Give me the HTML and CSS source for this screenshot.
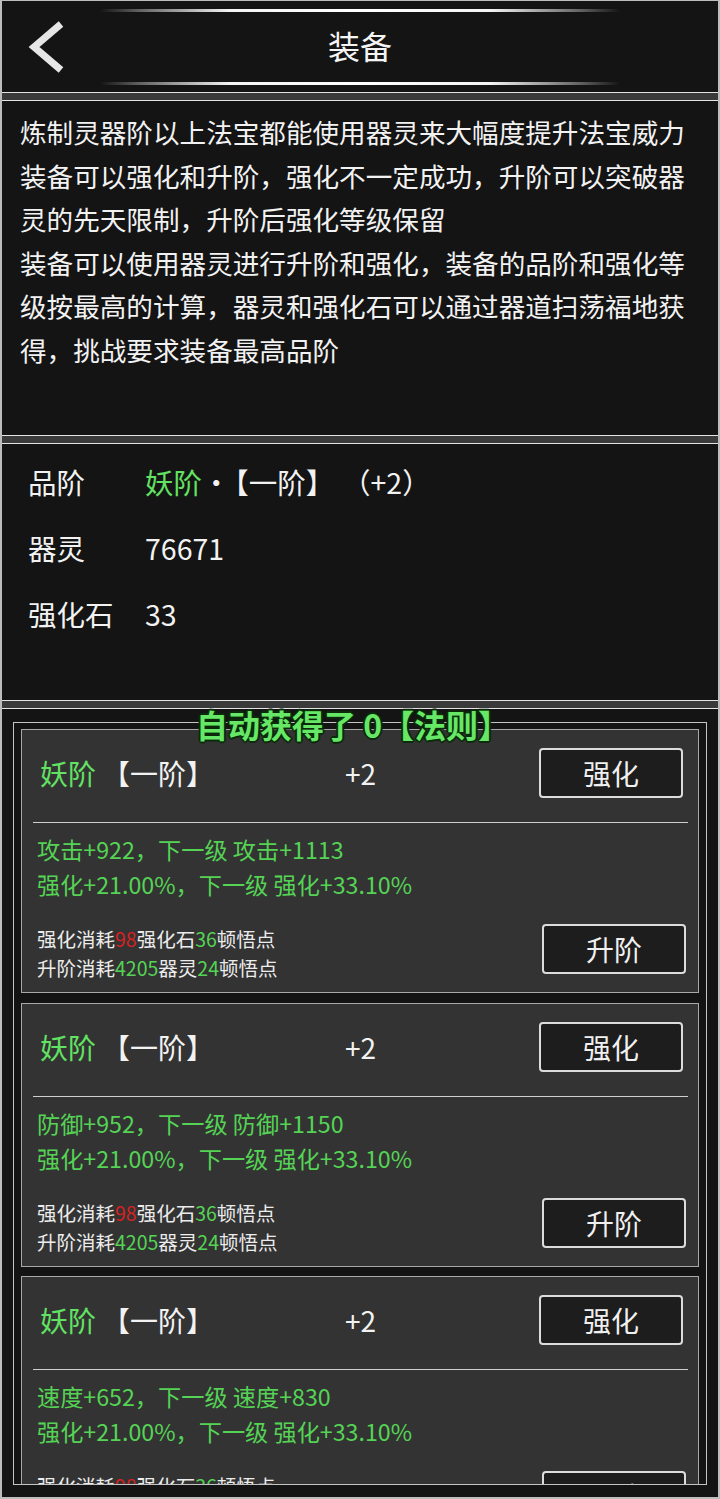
FILE: index.html
```
<!DOCTYPE html>
<html lang="zh-CN">
<head>
<meta charset="utf-8">
<title>装备</title>
<link rel="stylesheet" href="styles.css">
</head>
<body>
<div class="page">
  <header class="header">
    <div class="glow"></div>
    <div class="bar">
      <div class="back">
        <svg width="40" height="52" viewBox="0 0 40 52"><polyline points="33,3 6,26 33,49" fill="none" stroke="#e6e6e6" stroke-width="7" stroke-linejoin="miter"/></svg>
      </div>
      <div class="title">装备</div>
      <div></div>
    </div>
    <div class="glow"></div>
  </header>
  <div class="sep"></div>
  <section class="desc">
    <div>炼制灵器阶以上法宝都能使用器灵来大幅度提升法宝威力</div>
    <div>装备可以强化和升阶，强化不一定成功，升阶可以突破器</div>
    <div>灵的先天限制，升阶后强化等级保留</div>
    <div>装备可以使用器灵进行升阶和强化，装备的品阶和强化等</div>
    <div>级按最高的计算，器灵和强化石可以通过器道扫荡福地获</div>
    <div>得，挑战要求装备最高品阶</div>
  </section>
  <div class="sep"></div>
  <section class="stats">
    <div class="row"><span class="label">品阶</span><span class="val"><span class="g">妖阶</span>·<span class="rank">【一阶】</span><span class="plus">（+2）</span></span></div>
    <div class="row"><span class="label">器灵</span><span class="val">76671</span></div>
    <div class="row"><span class="label">强化石</span><span class="val">33</span></div>
  </section>
  <div class="sep"></div>
  <section class="list">
    <div class="box">
      <div class="card">
        <div class="card-head"><span class="ctitle"><span class="g">妖阶</span><span class="crank">【一阶】</span></span><span class="lvl">+2</span><button class="btn">强化</button></div>
        <div class="divider"></div>
        <div class="attrs"><div>攻击+922，下一级 攻击+1113</div><div>强化+21.00%，下一级 强化+33.10%</div></div>
        <div class="card-foot">
          <div class="cost"><div>强化消耗<span class="r">98</span>强化石<span class="cg">36</span>顿悟点</div><div>升阶消耗<span class="cg">4205</span>器灵<span class="cg">24</span>顿悟点</div></div>
          <button class="btn btn2">升阶</button>
        </div>
      </div>
      <div class="card">
        <div class="card-head"><span class="ctitle"><span class="g">妖阶</span><span class="crank">【一阶】</span></span><span class="lvl">+2</span><button class="btn">强化</button></div>
        <div class="divider"></div>
        <div class="attrs"><div>防御+952，下一级 防御+1150</div><div>强化+21.00%，下一级 强化+33.10%</div></div>
        <div class="card-foot">
          <div class="cost"><div>强化消耗<span class="r">98</span>强化石<span class="cg">36</span>顿悟点</div><div>升阶消耗<span class="cg">4205</span>器灵<span class="cg">24</span>顿悟点</div></div>
          <button class="btn btn2">升阶</button>
        </div>
      </div>
      <div class="card">
        <div class="card-head"><span class="ctitle"><span class="g">妖阶</span><span class="crank">【一阶】</span></span><span class="lvl">+2</span><button class="btn">强化</button></div>
        <div class="divider"></div>
        <div class="attrs"><div>速度+652，下一级 速度+830</div><div>强化+21.00%，下一级 强化+33.10%</div></div>
        <div class="card-foot">
          <div class="cost"><div>强化消耗<span class="r">98</span>强化石<span class="cg">36</span>顿悟点</div><div>升阶消耗<span class="cg">4205</span>器灵<span class="cg">24</span>顿悟点</div></div>
          <button class="btn btn2">升阶</button>
        </div>
      </div>
    </div>
  </section>
  <div class="toast">自动获得了 0【法则】</div>
</div>
</body>
</html>
```
FILE: styles.css
```
* { box-sizing: border-box; }
html, body { margin: 0; padding: 0; background: #141414; }
body {
  font-family: "Noto Sans CJK SC", "Noto Sans", sans-serif;
  color: #f2f2f2;
}
.page {
  position: relative;
  width: 720px;
  height: 1499px;
  border: 2px solid #bdbdbd;
  border-top-width: 1px;
  background: #141414;
  display: flex;
  flex-direction: column;
  overflow: hidden;
}
.header {
  height: 91px;
  padding-top: 8px;
  display: flex;
  flex-direction: column;
}
.glow {
  height: 3px;
  margin: 0 98px;
  border-radius: 2px;
  background: linear-gradient(90deg, rgba(255,255,255,0) 0%, rgba(255,255,255,0.35) 8%, #f4f4f4 25%, #ffffff 50%, #f4f4f4 75%, rgba(255,255,255,0.35) 92%, rgba(255,255,255,0) 100%);
}
.bar {
  height: 70px;
  display: grid;
  grid-template-columns: 1fr auto 1fr;
  align-items: center;
}
.back { padding-left: 26px; display: flex; align-items: center; }
.back svg { display: block; }
.title {
  font-size: 32px;
  line-height: 40px;
  color: #f4f4f4;
  margin-bottom: 4px;
}
.sep {
  height: 9px;
  border-top: 1px solid #e4e4e4;
  border-bottom: 1px solid #e4e4e4;
  background: #3a3a3a;
  flex: none;
}
.desc {
  height: 334px;
  padding: 9px 0 0 18px;
  font-size: 26.6px;
  line-height: 43.5px;
  white-space: nowrap;
  color: #f2f2f2;
}
.stats {
  height: 256px;
  padding: 4px 0 0 26px;
}
.row {
  display: flex;
  height: 66px;
  align-items: center;
  font-size: 28.5px;
}
.label { width: 117px; }
.rank { margin-left: 4px; }
.plus { margin-left: 22px; }
.g { color: #62e262; }
.list {
  flex: 1;
  padding-top: 13px;
}
.box {
  margin: 0 11px;
  height: 763px;
  border: 1px solid #c4c4c4;
  padding: 6px 7px 0;
  overflow: hidden;
  display: flex;
  flex-direction: column;
  gap: 9.5px;
}
.card {
  flex: none;
  height: 264px;
  border: 1px solid #a8a8a8;
  background: #333333;
}
.card-head {
  margin-top: 18px;
  height: 50px;
  padding: 0 15px 0 18px;
  display: grid;
  grid-template-columns: 1fr auto 1fr;
  align-items: center;
  font-size: 28px;
}
.ctitle { justify-self: start; }
.crank { margin-left: 6px; }
.lvl { justify-self: center; margin-right: 2px; }
.btn {
  justify-self: end;
  width: 144px;
  height: 50px;
  background: #1d1d1d;
  border: 2px solid #dcdcdc;
  border-radius: 4px;
  color: #f0f0f0;
  font-family: "Noto Sans CJK SC", "Noto Sans", sans-serif;
  font-size: 28px;
  line-height: 1;
  padding: 0;
}
.divider {
  margin: 24px 10px 0 11px;
  height: 1px;
  background: #cfcfcf;
}
.attrs {
  margin-top: 9px;
  padding-left: 15px;
  font-size: 23.2px;
  line-height: 35px;
  color: #55d355;
  white-space: nowrap;
}
.card-foot {
  margin-top: 22px;
  padding: 0 12px 0 15px;
  display: flex;
  justify-content: space-between;
  align-items: flex-start;
}
.cost {
  font-size: 19.5px;
  line-height: 29px;
  color: #ececec;
  white-space: nowrap;
}
.r { color: #d62222; }
.cg { color: #55d355; }
.btn2 { flex: none; }
.toast {
  position: absolute;
  top: 703px;
  left: 0;
  width: 702px;
  text-align: center;
  font-size: 32px;
  line-height: 40px;
  font-weight: 700;
  color: #66e766;
  text-shadow: 1px 1px 0 #0a2a0a, -1px -1px 0 #0a2a0a, 1px -1px 0 #0a2a0a, -1px 1px 0 #0a2a0a, 0 2px 0 #0a2a0a, 2px 0 0 #0a2a0a, 0 -2px 0 #0a2a0a, -2px 0 0 #0a2a0a;
  white-space: nowrap;
}
```
